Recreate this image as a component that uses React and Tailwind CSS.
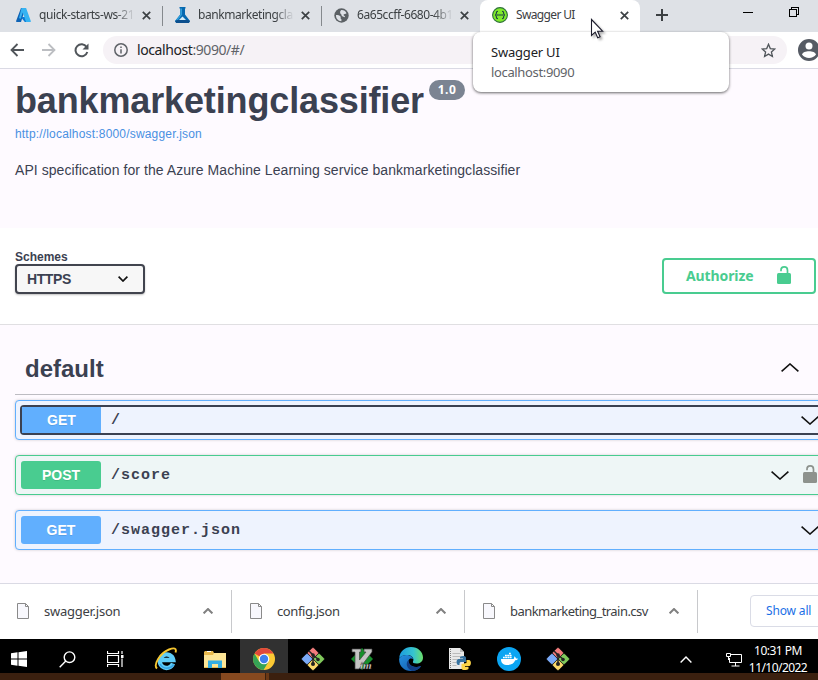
import React from "react";

const seg = "font-['Noto_Sans',sans-serif]";
const arial = "font-['Liberation_Sans',Arial,sans-serif]";

function Close() {
  return (
    <svg width="9" height="9" viewBox="0 0 9 9" className="shrink-0" fill="none" stroke="#3c4144" strokeWidth="1.7">
      <path d="M.8.8l7.4 7.4M8.2.8L.8 8.2" />
    </svg>
  );
}

function Chevron({ up, w = 18, h = 9, color = "#111", sw = 1.6, className = "" }) {
  return (
    <svg width={w} height={h} className={`shrink-0 ${className}`} fill="none" stroke={color} strokeWidth={sw}>
      <path d={up ? `M.6 ${h - 0.6}L${w / 2} 1L${w - 0.6} ${h - 0.6}` : `M.6 .6L${w / 2} ${h - 1}L${w - 0.6} .6`} />
    </svg>
  );
}

function Lock({ color }) {
  return (
    <svg width="14" height="18" viewBox="0 0 14 18" className="shrink-0">
      <path d="M4 5.2V4.2C4 2.2 5.200 .9 7.200 .9s3.300 1.300 3.300 3.300V8.500" fill="none" stroke={color} strokeWidth="1.700" />
      <rect y="7" width="14" height="11" rx="1.500" fill={color} />
    </svg>
  );
}

function AzureIcon() {
  return (
    <svg width="15" height="14" viewBox="0 0 15 14" className="shrink-0">
      <path d="M5 0h4.500L5 14H.8c-.6 0-.9-.5-.7-1z" fill="#0e63b5" />
      <path d="M11.500 9H4.800l4 5h4.500z" fill="#0a78d4" />
      <path d="M5.500 0h4.600l4.700 13c.2.500-.1 1-.7 1H10L6.800 4.500 4.500 11 3 10z" fill="#36b3f2" />
    </svg>
  );
}

function MlIcon() {
  return (
    <svg width="15" height="16" viewBox="0 0 15 16" className="shrink-0">
      <path d="M4.500 0h6v1.500H10v6l5 6.500-1.200 2H1.200L0 14l5.200-6.500v-6h-.7z" fill="#0769b0" />
      <path d="M5.500 1.500H7v6.300L2.500 13.500 0 14l5.500-6.600z" fill="#2f9fdc" />
      <path d="M7.500 9.500l4 4h-8z" fill="#d5edf8" />
      <path d="M0 14l2-1h11l2 1-1.200 2H1.200z" fill="#0b4f8e" />
    </svg>
  );
}

function GlobeIcon() {
  return (
    <svg width="15" height="15" viewBox="0 0 15 15" className="shrink-0">
      <circle cx="7.500" cy="7.500" r="7.200" fill="#5b6064" />
      <path d="M2 7c2 0 3.500.2 4.500 1.500.8 1-.6 1.500.4 2.300.8.500.7 1.600.4 2.400C4 13 1.800 10.500 2 7z" fill="#dee1e6" />
      <path d="M7 2.200c2.200-.4 4.500.8 5.500 3-.8 1.200-2.500.4-3 1.600-.3 1 1.800.9 1.500 2.400C8.800 9 7 7.800 7.300 6.300 6 5.700 5.600 3.500 7 2.200z" fill="#dee1e6" />
    </svg>
  );
}

function SwaggerIcon() {
  return (
    <svg width="16" height="16" viewBox="0 0 16 16" className="shrink-0">
      <circle cx="8" cy="8" r="7.400" fill="#7fea2c" stroke="#2d6f3c" strokeWidth="1.100" />
      <path d="M6 4.300c-1.300 0-1.600.4-1.600 1.500S4.200 7.800 3.200 8c1 .2 1.200 1.100 1.200 2.200s.3 1.500 1.600 1.500M10 4.300c1.300 0 1.600.4 1.600 1.500s.2 2 1.200 2.200c-1 .2-1.200 1.100-1.200 2.200s-.3 1.500-1.600 1.500" fill="none" stroke="#173647" strokeWidth="1.100" />
      <path d="M5.300 8h5.400" stroke="#173647" strokeWidth="1.300" strokeDasharray="1.300 .75" />
    </svg>
  );
}

function Tab({ icon, children, divider = true, tracking }) {
  return (
    <div className="flex h-full w-[159px] shrink-0 items-center pb-[2px]">
      <div className="flex w-[16px] shrink-0 justify-center">{icon}</div>
      <span
        className={`ml-[8px] w-[96px] whitespace-nowrap text-[12px] leading-4 text-[#3c4043] ${seg} ${tracking} [mask-image:linear-gradient(to_right,black_80%,transparent)]`}
      >
        {children}
      </span>
      <div className="ml-[7px] flex">
        <Close />
      </div>
      {divider && <div className="ml-[11px] mt-[2px] h-5 w-px bg-[#85898d]" />}
    </div>
  );
}

function TabStrip() {
  return (
    <div className="flex h-8 w-full bg-[#dee1e6]">
      <div className="flex w-[480px] shrink-0 pl-[15px]">
        <Tab icon={<AzureIcon />} tracking="tracking-[-0.4px]">quick-starts-ws-21</Tab>
        <Tab icon={<MlIcon />} tracking="tracking-[-0.44px]">bankmarketingcla</Tab>
        <Tab icon={<GlobeIcon />} tracking="tracking-[-0.44px]" divider={false}>6a65ccff-6680-4b1</Tab>
      </div>
      <div className="flex w-[160px] shrink-0 items-center rounded-t-lg bg-white pb-[2px] pl-3">
        <SwaggerIcon />
        <span className={`ml-2 w-[104px] text-[12px] leading-4 tracking-[-0.65px] text-[#3c4043] ${seg}`}>Swagger UI</span>
        <Close />
      </div>
      <div className="flex flex-1 items-start pl-[16px]">
        <svg width="12" height="12" className="mt-[9px]" stroke="#3c4043" strokeWidth="2">
          <path d="M6 0v12M0 6h12" />
        </svg>
        <div className="ml-[75px] mt-[12px] h-px w-[10px] bg-black" />
        <svg width="11" height="11" className="ml-[36px] mt-[7px]" fill="none" stroke="#000" shapeRendering="crispEdges">
          <path d="M.5 2.500h7v7h-7zM2.500 2.500v-2h7v7h-2" />
        </svg>
      </div>
    </div>
  );
}

function Toolbar() {
  return (
    <div className="flex h-[37px] w-full items-center overflow-hidden border-b border-[#dadae4] bg-white pl-[10px]">
      <svg width="14" height="14" className="shrink-0" fill="none" stroke="#50555a" strokeWidth="1.800">
        <path d="M14 7H1.500M7.500 1L1.500 7l6 6" />
      </svg>
      <svg width="14" height="14" className="ml-[18px] shrink-0" fill="none" stroke="#bcbec2" strokeWidth="1.800">
        <path d="M0 7h12.500M6.500 1l6 6-6 6" />
      </svg>
      <svg width="15" height="15" className="ml-[18px] shrink-0" fill="none" stroke="#50555a" strokeWidth="2">
        <path d="M12.600 4A6 6 0 1 0 13.300 9" />
        <path d="M14.500 .5V6.500H8.500z" fill="#50555a" stroke="none" />
      </svg>
      <div className="ml-[14px] flex h-7 w-[684px] shrink-0 items-center rounded-full bg-[#f6f2f6] pl-[11px] pr-[11px]">
        <svg width="14" height="14" fill="none" stroke="#5f6368" strokeWidth="1.500">
          <circle cx="7" cy="7" r="6.200" />
          <path d="M7 6.200v4.300M7 3.500v1.500" />
        </svg>
        <span className={`ml-[9px] text-[14px] leading-5 tracking-[-0.42px] text-[#606368] ${seg}`}>
          <span className="text-[#202124]">localhost</span>:9090/#/
        </span>
        <svg width="15" height="15" viewBox="0 0 15 15" className="ml-auto" fill="none" stroke="#50555a" strokeWidth="1.300">
          <path d="M7.500 1.300l1.800 4.300 4.500.4-3.400 3 1 4.500-3.900-2.400-3.900 2.400 1-4.500-3.400-3 4.500-.4z" />
        </svg>
      </div>
      <svg width="22" height="22" viewBox="0 0 22 22" className="ml-[11px] shrink-0">
        <circle cx="11" cy="11" r="11" fill="#565b64" />
        <circle cx="11" cy="7" r="3.500" fill="#fff" />
        <path d="M4 15.500c1-4.500 13-4.500 14 0-3 4.500-11 4.500-14 0z" fill="#fff" />
      </svg>
    </div>
  );
}

function Info() {
  return (
    <section className={`h-[159px] pl-[15px] text-[#3b4151] ${arial}`}>
      <div className="flex pt-[11px]">
        <h1 className="h-[42px] w-[409px] whitespace-nowrap text-[36px] font-bold leading-[42px] tracking-[-0.14px]">bankmarketingclassifier</h1>
        <span className={`ml-[5px] flex h-5 w-9 items-center justify-center rounded-full bg-[#7b8492] text-[12px] font-bold tracking-[0.4px] text-white ${seg}`}>
          1.0
        </span>
      </div>
      <div className="mt-[4px] text-[12px] leading-4 tracking-[0.18px] text-[#4990e2]">http://localhost:8000/swagger.json</div>
      <p className="mt-[18px] text-[14px] leading-5 tracking-[0.06px]">
        API specification for the Azure Machine Learning service bankmarketingclassifier
      </p>
    </section>
  );
}

function Schemes() {
  return (
    <section className={`flex h-[97px] justify-between border-b border-[#e0dfe2] bg-white pl-[15px] pr-[2px] text-[#3b4151] ${arial}`}>
      <div className="pt-[22px]">
        <div className="text-[12px] font-bold leading-[14px]">Schemes</div>
        <div className="flex h-[30px] w-[130px] items-center justify-between rounded border-2 border-[#41444e] bg-[#f7f7f7] pl-[10px] pr-[15px] shadow-[0_1px_2px_rgba(0,0,0,0.25)]">
          <span className="text-[14px] font-bold tracking-[-0.4px]">HTTPS</span>
          <Chevron w={10} h={6} sw={1.7} />
        </div>
      </div>
      <div className={`mt-[30px] flex h-9 w-[154px] items-center rounded border-2 border-[#49cc90] pl-[22px] text-[14px] font-bold text-[#49cc90] ${seg}`}>
        <span className="-mt-[2px] w-[91px] tracking-[-0.1px]">Authorize</span>
        <div className="-mt-[2px]">
          <Lock color="#49cc90" />
        </div>
      </div>
    </section>
  );
}

function Operation({ method, path, green, focused, lock }) {
  const frame = green ? "border-[#49cc90] bg-[#eef6f6]" : "border-[#61affe] bg-[#eef3fe]";
  const badge = green ? "bg-[#49cc90]" : "bg-[#61affe]";
  return (
    <div className={`flex h-10 w-[840px] rounded border p-1 shadow-[0_0_3px_rgba(0,0,0,0.19)] ${frame}`}>
      <div className={`flex h-[30px] w-full items-center rounded-[4px] ${focused ? "border-2 border-[#3b4151]" : "pl-px"}`}>
        <div className={`flex items-center justify-center text-[14px] font-bold text-white [text-shadow:0_1px_0_rgba(0,0,0,0.1)] ${badge} ${arial} ${focused ? "h-[26px] w-[79px]" : "h-7 w-20 rounded-[3px]"}`}>
          {method}
        </div>
        <div className="ml-[10px] w-[660px] shrink-0 pt-px font-['Liberation_Mono','Courier_New',monospace] text-[15px] font-bold leading-5 tracking-[1px] text-[#3b4151]">
          {path}
        </div>
        <div className={lock ? "flex items-center gap-[14px]" : "ml-[30px] flex"}>
          <Chevron />
          {lock && (
            <div className="-mt-[3px]">
              <Lock color="#8d928d" />
            </div>
          )}
        </div>
      </div>
    </div>
  );
}

function Operations() {
  return (
    <section className="h-[258px] overflow-hidden pl-[15px]">
      <div className="flex h-[70px] items-center justify-between border-b border-[#bdbcc2] pl-[10px] pr-[19px] pt-[18px]">
        <h2 className={`mt-px text-[24px] font-bold leading-none text-[#3b4151] ${arial}`}>default</h2>
        <Chevron up className="-mt-[2px]" />
      </div>
      <div className="mt-[5px] flex flex-col gap-[15px]">
        <Operation method="GET" path="/" focused />
        <Operation method="POST" path="/score" green lock />
        <Operation method="GET" path="/swagger.json" />
      </div>
    </section>
  );
}

function Download({ name, tracking }) {
  return (
    <div className="flex w-[233px] shrink-0 items-center">
      <svg width="12" height="16" className="-mt-px ml-[17px] shrink-0" fill="#f8f8fd" stroke="#8a8a8a">
        <path d="M.5.500h8l3 3v12H.5zM8.500.500v3h3" />
      </svg>
      <span className={`-mt-[2px] ml-[15px] w-[159px] whitespace-nowrap text-[13px] leading-4 text-[#3c4043] ${seg} ${tracking}`}>{name}</span>
      <Chevron up w={10} h={6} sw={2} color="#808080" className="-mt-[2px]" />
      <div className="ml-[18px] h-[43px] w-px bg-[#c8c9cc]" />
    </div>
  );
}

function Downloads() {
  return (
    <div className="flex h-14 items-center overflow-hidden border-t border-[#dadae4] bg-white">
      <Download name="swagger.json" tracking="tracking-[-0.25px]" />
      <Download name="config.json" tracking="tracking-[-0.4px]" />
      <Download name="bankmarketing_train.csv" tracking="tracking-[-0.54px]" />
      <div className={`-mt-px ml-[51px] flex h-8 w-[78px] shrink-0 items-center whitespace-nowrap rounded border border-[#dadce6] pl-[15px] text-[12px] tracking-[-0.15px] text-[#1a6fe6] ${seg}`}>
        Show all
      </div>
    </div>
  );
}

function GitIcon() {
  return (
    <svg width="24" height="24" viewBox="0 0 24 24">
      <g stroke="#111" strokeWidth=".5">
        <rect x="7.800" y="1.800" width="8.400" height="8.400" rx="1.200" transform="rotate(45 12 6)" fill="#f37c7c" />
        <rect x="13.800" y="7.800" width="8.400" height="8.400" rx="1.200" transform="rotate(45 18 12)" fill="#80c95b" />
        <rect x="1.800" y="7.800" width="8.400" height="8.400" rx="1.200" transform="rotate(45 6 12)" fill="#7baaf7" />
        <rect x="7.800" y="13.800" width="8.400" height="8.400" rx="1.200" transform="rotate(45 12 18)" fill="#fbd96b" />
      </g>
      <path d="M8 4l4 4v9M12 8l5 4" fill="none" stroke="#222" strokeWidth="1.500" />
      <circle cx="12" cy="8" r="1.800" fill="#222" />
      <circle cx="12" cy="17" r="2" fill="#222" />
      <circle cx="17" cy="12.500" r="1.800" fill="#222" />
    </svg>
  );
}

function IeIcon() {
  return (
    <svg width="24" height="24" viewBox="0 0 24 24">
      <path d="M19 16.500A6.800 6.800 0 1 1 19.300 13H8" fill="none" stroke="#5fcdf8" strokeWidth="4.300" />
      <path d="M19.500 17.500A7.800 7.800 0 0 1 6 17" fill="none" stroke="#35a3e6" strokeWidth="1.500" />
      <path d="M3 21.500C-1 18 6 6 15 2.500c5-2 8-1.500 6.500 3" fill="none" stroke="#f6c630" strokeWidth="1.900" />
    </svg>
  );
}

function FolderIcon() {
  return (
    <svg width="22" height="19" viewBox="0 0 22 19">
      <path d="M1 1h8l1 2h12v15H0V2z" fill="#e9b94c" />
      <path d="M0 5h9l1-2h12v14H0z" fill="#fde596" />
      <path d="M4 18v-7.500h14V18h-4v-4H8v4z" fill="#35aee2" />
      <path d="M3 1.500h4" stroke="#fff" />
    </svg>
  );
}

function ChromeIcon() {
  return (
    <svg width="22" height="22" viewBox="0 0 22 22">
      <circle cx="11" cy="11" r="11" fill="#fbc934" />
      <path d="M11 11L1.500 5.500A11 11 0 0 1 20.500 5.500H11z" fill="#e0483b" />
      <path d="M1.500 5.500A11 11 0 0 0 10.500 22l5.200-8.500L11 11 6.200 13.700z" fill="#35a355" />
      <circle cx="11" cy="11" r="5.300" fill="#fff" />
      <circle cx="11" cy="11" r="4.200" fill="#3f7fec" />
    </svg>
  );
}

function VimIcon() {
  return (
    <svg width="24" height="24" viewBox="0 0 24 24">
      <path d="M12 1l11 11-11 11L1 12z" fill="#16902c" />
      <path d="M2 2h9v3H9.500v8L16 5h-2V2h8v3L9 22H5V5H2z" fill="#c5c5c5" stroke="#444" strokeWidth=".7" />
      <text x="10" y="22" fontSize="11" fontStyle="italic" fontWeight="bold" fontFamily="Liberation Serif, serif" fill="#e2e2e2" stroke="#222" strokeWidth=".3">im</text>
    </svg>
  );
}

function EdgeIcon() {
  return (
    <svg width="24" height="24" viewBox="0 0 24 24">
      <defs>
        <linearGradient id="edgeTop" x1="0" x2="1">
          <stop offset="0" stopColor="#1b9be0" />
          <stop offset=".6" stopColor="#36c4cf" />
          <stop offset="1" stopColor="#6be06a" />
        </linearGradient>
        <linearGradient id="edgeLow" x1="0" x2="1" y2="1">
          <stop offset="0" stopColor="#2590e0" />
          <stop offset="1" stopColor="#1156a8" />
        </linearGradient>
      </defs>
      <path d="M.2 11C1 4 6 0 12 0c7 0 12 5 12 10.500 0 4-3 6-6.500 6-3 0-4-1-3.500-2 1.500-3-1-6-5-6.500C5 7.500 2 9 .2 11z" fill="url(#edgeTop)" />
      <path d="M.2 11.500C2 8.500 5.500 7.500 9 8c3.500.5 5 2.500 5 4-1-1-4-1-4.500 1.500-.5 4 4 7 8.500 6.500 2-.3 3.500-1 4-.8C20 22.500 16 24 12 24 5 24-.5 18.500.2 11.500z" fill="url(#edgeLow)" />
      <path d="M9.500 13c-.5 4.500 4 7.500 8.500 7 2-.3 3.500-1.500 4-.8-2.500 3.500-6 4.800-9 4.700C8 22 6 16 9.500 13z" fill="#123f86" />
    </svg>
  );
}

function PythonFileIcon() {
  return (
    <svg width="24" height="24" viewBox="0 0 24 24">
      <path d="M1 1h11l4 4v17H1z" fill="#e8e8e8" />
      <path d="M12 1v4h4" fill="#bbb" />
      <path d="M2.500 2v19" stroke="#777" strokeDasharray="1 1" />
      <path d="M4.500 6.500h8M4.500 9.500h9M4.500 12.500h5M4.500 15.500h4M4.500 18.500h4" stroke="#bbb" />
      <path d="M12 10c2-1.500 6-1.200 6 .8v4.200h-5c-1.500 0-1.500 1.500-1.500 3H10c-2-1-2-5.500.5-6H15v-.6h-3z" fill="#36729f" />
      <path d="M18.500 13H21c2.500.5 2.500 5 .5 6H17v.7h3.500V22c-2 1.700-7 1.500-7-.8V17l5-1z" fill="#fdd548" />
    </svg>
  );
}

function DockerIcon() {
  return (
    <svg width="24" height="24" viewBox="0 0 24 24">
      <circle cx="12" cy="12" r="12" fill="#0ba5f2" />
      <path d="M4 12h12.500c1-.5.7-2 .6-2.500 1.200.3 1.700 1.200 1.900 2 .7-.1 1.500 0 2 .3-.7 1-1.600 1.500-2.800 1.500-1.200 3-3.700 4.700-7.500 4.700-4.500 0-6.700-2-6.700-6z" fill="#fff" />
      <path d="M6 10.500h9M8 8.500h7M12 6.500h2" stroke="#fff" strokeWidth="1.500" strokeDasharray="1.800 .4" />
    </svg>
  );
}

function Taskbar() {
  const apps = [IeIcon, FolderIcon, ChromeIcon, GitIcon, VimIcon, EdgeIcon, PythonFileIcon, DockerIcon, GitIcon];
  return (
    <div className="flex h-[34px] w-full bg-black text-white">
      <div className="flex w-[43px] shrink-0 items-center pl-[11px] pt-[6px]">
        <svg width="16" height="16" fill="#fff">
          <path d="M0 2.300L6.500 1.300V7.500H0zM7.500 1.200L16 0v7.500H7.500zM0 8.500h6.500v6.200L0 13.700zM7.500 8.500H16V16L7.500 14.800z" />
        </svg>
      </div>
      <div className="flex w-12 shrink-0 items-center justify-center pt-[6px]">
        <svg width="17" height="17" fill="none" stroke="#fff" strokeWidth="1.400">
          <circle cx="10.500" cy="6.200" r="5.300" />
          <path d="M6.800 10L.7 16.200" />
        </svg>
      </div>
      <div className="flex w-12 shrink-0 items-center justify-center pt-[5px]">
        <svg width="17" height="16" fill="none" stroke="#fff">
          <path d="M.5 0v2.500h11V0M.5 4.500h11v7H.5zM.5 16v-2.500h11V16M15 0v3M15 7.500V16" strokeWidth="1.200" />
          <path d="M14 4h2.500v3H14z" fill="#fff" stroke="none" />
        </svg>
      </div>
      <div className="flex w-[444px] shrink-0 pl-[2px]">
        {apps.map((Icon, i) => (
          <div key={i} className={`flex shrink-0 items-center justify-center pt-[6px] ${i === 2 ? "ml-px w-[48px] bg-[#313131]" : "w-[49px]"}`}>
            <Icon />
          </div>
        ))}
      </div>
      <div className="flex pl-[97px] pt-[17px]">
        <Chevron up w={12} h={7} sw={1.4} color="#fff" />
      </div>
      <svg width="17" height="14" className="ml-[34px] mt-[14px] shrink-0" fill="none" stroke="#fff">
        <path d="M5 1.500h10.500v8H3.500V5M9.500 10v3M5.500 13h8" />
        <path d="M.5.500h4v3h-4zM2.500 4v3" />
      </svg>
      <div className={`ml-[6px] w-[58px] shrink-0 whitespace-nowrap text-[12px] leading-[17px] ${seg}`}>
        <div className="flex h-[20px] items-end justify-center tracking-[-0.5px]">10:31 PM</div>
        <div className="flex justify-center tracking-[-0.55px]">11/10/2022</div>
      </div>
    </div>
  );
}

function Tooltip() {
  return (
    <div className={`absolute left-[473px] top-[32px] h-[60px] w-[256px] rounded-lg bg-white pl-[18px] pt-[10px] shadow-[0_1px_3px_rgba(0,0,0,0.6)] ${seg}`}>
      <div className="text-[13px] leading-[20px] tracking-[-0.2px] text-[#202124]">Swagger UI</div>
      <div className="text-[13px] leading-[20px] tracking-[-0.35px] text-[#5f6368]">localhost:9090</div>
    </div>
  );
}

export default function App() {
  return (
    <div className="relative flex h-[680px] w-[818px] flex-col overflow-hidden bg-[#fefaff]">
      <TabStrip />
      <Toolbar />
      <Info />
      <Schemes />
      <Operations />
      <Downloads />
      <Taskbar />
      <div className="flex h-[7px] bg-[#3b200f] pl-[221px]">
        <div className="h-full w-[44px] bg-[#86491f]" />
        <div className="ml-px h-full w-[3px] bg-[#6b3815]" />
      </div>
      <Tooltip />
      <svg width="16" height="24" viewBox="0 0 16 24" className="absolute left-[590px] top-[18px] drop-shadow-[2px_2px_1px_rgba(0,0,0,0.3)]">
        <path d="M1.500 1.500v16l3.700-3.400 2.500 5.700 2.400-1-2.500-5.600h5z" fill="#fff" stroke="#1c1c2c" strokeWidth="1.100" />
      </svg>
    </div>
  );
}
